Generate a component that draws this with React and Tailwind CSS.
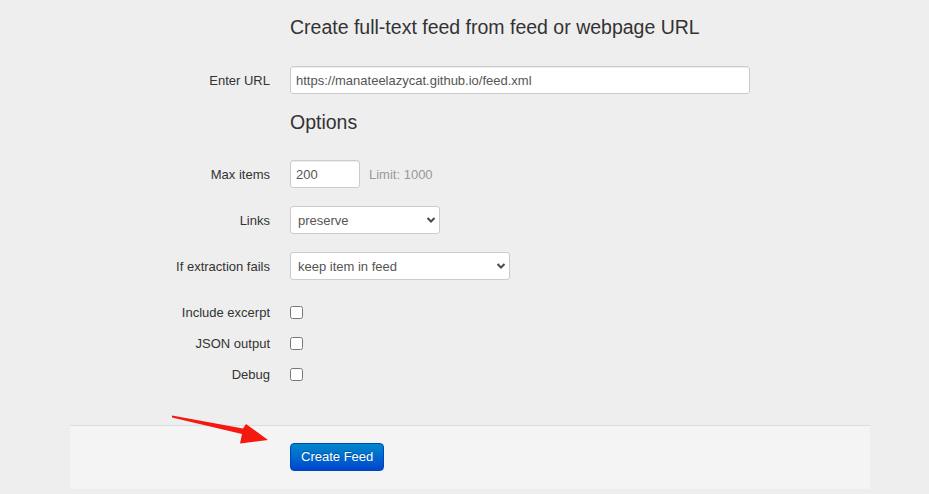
import React from 'react';

const labelCls = 'w-[220px] shrink-0 translate-y-[1px] pr-[20px] text-right text-[13px] text-[#333]';

const Chevron = () => (
  <svg
    className="pointer-events-none absolute right-[4px] top-1/2 -translate-y-1/2"
    width="10"
    height="7"
    viewBox="0 0 10 7"
  >
    <path d="M1.5 1.5L5 5L8.5 1.5" fill="none" stroke="#4a4a4a" strokeWidth="2" />
  </svg>
);

const SelectBox = ({ width, value }) => (
  <div className={`relative ${width}`}>
    <select
      defaultValue={value}
      className="h-[28px] w-full appearance-none rounded-[3px] border border-[#cccccc] bg-white pl-[7px] pt-[1px] text-[13px] text-[#555] outline-none"
    >
      <option>{value}</option>
    </select>
    <Chevron />
  </div>
);

const CheckRow = ({ label }) => (
  <div className="flex h-[20px] items-center">
    <label className={labelCls}>{label}</label>
    <input type="checkbox" className="m-0 h-[13px] w-[13px]" />
  </div>
);

const App = () => {
  return (
    <div className="relative min-h-screen bg-[#eeeeee] font-['Liberation_Sans',Arial,sans-serif]">
      <div className="ml-[70px] w-[800px]">
        <h3 className="pl-[220px] pt-[16px] text-[19.5px] leading-[22px] text-[#333]">
          Create full-text feed from feed or webpage URL
        </h3>

        <div className="mt-[28px] flex h-[28px] items-center">
          <label className={labelCls}>Enter URL</label>
          <input
            type="text"
            defaultValue="https://manateelazycat.github.io/feed.xml"
            className="h-[28px] w-[460px] rounded-[3px] border border-[#cccccc] bg-white px-[5px] text-[13px] text-[#555] shadow-[inset_0_1px_1px_rgba(0,0,0,0.075)] outline-none"
          />
        </div>

        <h3 className="mt-[17px] pl-[220px] text-[19.5px] leading-[22px] text-[#333]">Options</h3>

        <div className="mt-[27px] flex h-[28px] items-center">
          <label className={labelCls}>Max items</label>
          <input
            type="text"
            defaultValue="200"
            className="h-[28px] w-[70px] rounded-[3px] border border-[#cccccc] bg-white px-[5px] text-[13px] text-[#555] shadow-[inset_0_1px_1px_rgba(0,0,0,0.075)] outline-none"
          />
          <span className="ml-[9px] translate-y-[1px] text-[13px] text-[#999]">Limit: 1000</span>
        </div>

        <div className="mt-[18px] flex h-[28px] items-center">
          <label className={labelCls}>Links</label>
          <SelectBox width="w-[150px]" value="preserve" />
        </div>

        <div className="mt-[18px] flex h-[28px] items-center">
          <label className={labelCls}>If extraction fails</label>
          <SelectBox width="w-[220px]" value="keep item in feed" />
        </div>

        <div className="mt-[22px] flex flex-col gap-[11px]">
          <CheckRow label="Include excerpt" />
          <CheckRow label="JSON output" />
          <CheckRow label="Debug" />
        </div>

        <div className="mt-[41px] border-t border-[#dddddd] bg-[#f4f4f4] pb-[18px] pl-[220px] pt-[17px]">
          <button className="h-[28px] rounded-[4px] border border-[#0045c0] bg-gradient-to-b from-[#0088cc] to-[#0044cc] px-[10px] text-[13px] text-white [text-shadow:0_-1px_0_rgba(0,0,0,0.25)]">
            Create Feed
          </button>
        </div>
      </div>

      {/* annotation arrow */}
      <svg className="pointer-events-none absolute left-0 top-0" width="929" height="494">
        <polygon
          points="172,415.5 243,428.5 246,424 268,440 240,443.5 242,434 172,417.5"
          fill="#f5180f"
        />
      </svg>
    </div>
  );
};

export default App;
